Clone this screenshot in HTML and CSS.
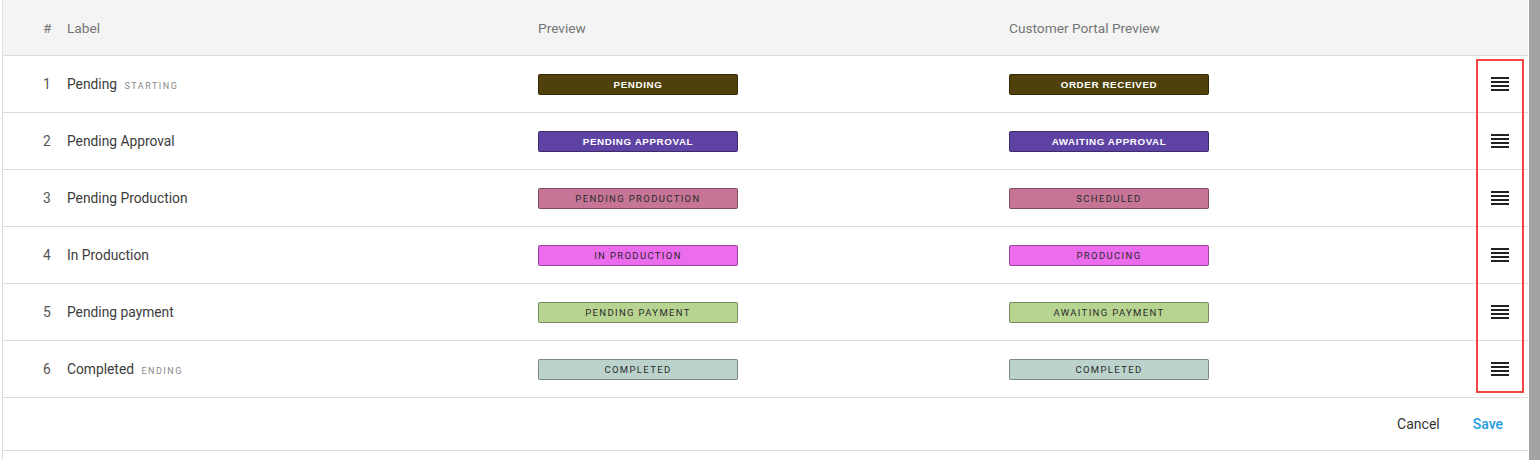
FILE: index.html
```html
<!DOCTYPE html>
<html lang="en">
<head>
    <meta charset="UTF-8">
    <title>Order Statuses</title>
    <link rel="stylesheet" href="styles.css">
</head>
<body>
    <div class="page">
        <div class="status-table">
            <div class="row head">
                <div class="num">#</div>
                <div>Label</div>
                <div>Preview</div>
                <div>Customer Portal Preview</div>
                <div></div>
            </div>

            <div class="row">
                <div class="num">1</div>
                <div class="label">Pending <span class="tag">STARTING</span></div>
                <div><span class="badge dark c-pending">PENDING</span></div>
                <div><span class="badge dark c-pending">ORDER RECEIVED</span></div>
                <div class="handle"><svg viewBox="0 0 24 24" width="24" height="24"><path d="M3 15h18v-2H3v2zm0 4h18v-2H3v2zm0-8h18V9H3v2zm0-6v2h18V5H3z"/></svg></div>
            </div>
            <div class="row">
                <div class="num">2</div>
                <div class="label">Pending Approval</div>
                <div><span class="badge dark c-approval">PENDING APPROVAL</span></div>
                <div><span class="badge dark c-approval">AWAITING APPROVAL</span></div>
                <div class="handle"><svg viewBox="0 0 24 24" width="24" height="24"><path d="M3 15h18v-2H3v2zm0 4h18v-2H3v2zm0-8h18V9H3v2zm0-6v2h18V5H3z"/></svg></div>
            </div>
            <div class="row">
                <div class="num">3</div>
                <div class="label">Pending Production</div>
                <div><span class="badge c-pendprod">PENDING PRODUCTION</span></div>
                <div><span class="badge c-pendprod">SCHEDULED</span></div>
                <div class="handle"><svg viewBox="0 0 24 24" width="24" height="24"><path d="M3 15h18v-2H3v2zm0 4h18v-2H3v2zm0-8h18V9H3v2zm0-6v2h18V5H3z"/></svg></div>
            </div>
            <div class="row">
                <div class="num">4</div>
                <div class="label">In Production</div>
                <div><span class="badge c-inprod">IN PRODUCTION</span></div>
                <div><span class="badge c-inprod">PRODUCING</span></div>
                <div class="handle"><svg viewBox="0 0 24 24" width="24" height="24"><path d="M3 15h18v-2H3v2zm0 4h18v-2H3v2zm0-8h18V9H3v2zm0-6v2h18V5H3z"/></svg></div>
            </div>
            <div class="row">
                <div class="num">5</div>
                <div class="label">Pending payment</div>
                <div><span class="badge c-payment">PENDING PAYMENT</span></div>
                <div><span class="badge c-payment">AWAITING PAYMENT</span></div>
                <div class="handle"><svg viewBox="0 0 24 24" width="24" height="24"><path d="M3 15h18v-2H3v2zm0 4h18v-2H3v2zm0-8h18V9H3v2zm0-6v2h18V5H3z"/></svg></div>
            </div>
            <div class="row">
                <div class="num">6</div>
                <div class="label">Completed <span class="tag">ENDING</span></div>
                <div><span class="badge c-completed">COMPLETED</span></div>
                <div><span class="badge c-completed">COMPLETED</span></div>
                <div class="handle"><svg viewBox="0 0 24 24" width="24" height="24"><path d="M3 15h18v-2H3v2zm0 4h18v-2H3v2zm0-8h18V9H3v2zm0-6v2h18V5H3z"/></svg></div>
            </div>

            <div class="actions">
                <button class="btn">Cancel</button>
                <button class="btn save">Save</button>
            </div>

            <!-- highlight round the drag handles -->
            <div class="highlight"></div>
        </div>
        <div class="scrollbar"></div>
    </div>
</body>
</html>
```

FILE: styles.css
```css
body {
    margin: 0;
    font-family: Roboto, "Liberation Sans", Arial, sans-serif;
    background: #fff;
    color: #333;
}
.page {
    display: flex;
    height: 460px;
}
.status-table {
    position: relative;
    width: 1525px;
    margin-left: 2px;
    border-left: 1px solid #ddd;
}
.row {
    display: grid;
    grid-template-columns: 64px 471px 471px 1fr 24px;
    align-items: center;
    height: 56px;
    padding-right: 16px;
    border-bottom: 1px solid #dcdcdc;
    font-size: 13.8px;
}
.row.head {
    height: 55px;
    background: #f4f4f4;
    color: #757575;
    font-size: 13.7px;
}
.num {
    padding-left: 40px;
    color: #555;
}
.head .num {
    color: #757575;
}
.label {
    color: #3c3c3c;
}
.tag {
    margin-left: 4px;
    font-size: 9px;
    letter-spacing: 1.5px;
    color: #888;
}
.badge {
    display: block;
    box-sizing: border-box;
    width: 200px;
    height: 21px;
    line-height: 19px;
    border: 1px solid rgba(0, 0, 0, 0.35);
    border-radius: 2px;
    text-align: center;
    font-size: 9.5px;
    letter-spacing: 1.35px;
    color: #2a2a2a;
}
.badge.dark {
    color: #fff;
    font-weight: bold;
    font-size: 9.8px;
    letter-spacing: 0.6px;
    font-family: "Liberation Sans", Arial, sans-serif;
}
.c-pending { background: #4f4109; }
.c-approval { background: #5e42a4; }
.c-pendprod { background: #c67597; }
.c-inprod { background: #ec6cee; }
.c-payment { background: #b8d491; }
.c-completed { background: #bcd3cd; }
.handle {
    display: flex;
    height: 24px;
}
.handle svg {
    fill: #222;
}
.actions {
    display: flex;
    justify-content: flex-end;
    align-items: center;
    gap: 17px;
    height: 52px;
    padding-right: 17px;
    border-bottom: 1px solid #dcdcdc;
}
.btn {
    padding: 0 8px;
    border: none;
    background: none;
    font-family: Roboto, "Liberation Sans", Arial, sans-serif;
    font-size: 14px;
    color: #333;
    cursor: pointer;
}
.btn.save {
    color: #1d9be2;
    font-weight: 500;
}
.highlight {
    position: absolute;
    left: 1473px;
    top: 59px;
    width: 44px;
    height: 330px;
    border: 2px solid #f44545;
}
.scrollbar {
    width: 11px;
    margin-left: 1px;
    background: #a3a3a3;
}
```
